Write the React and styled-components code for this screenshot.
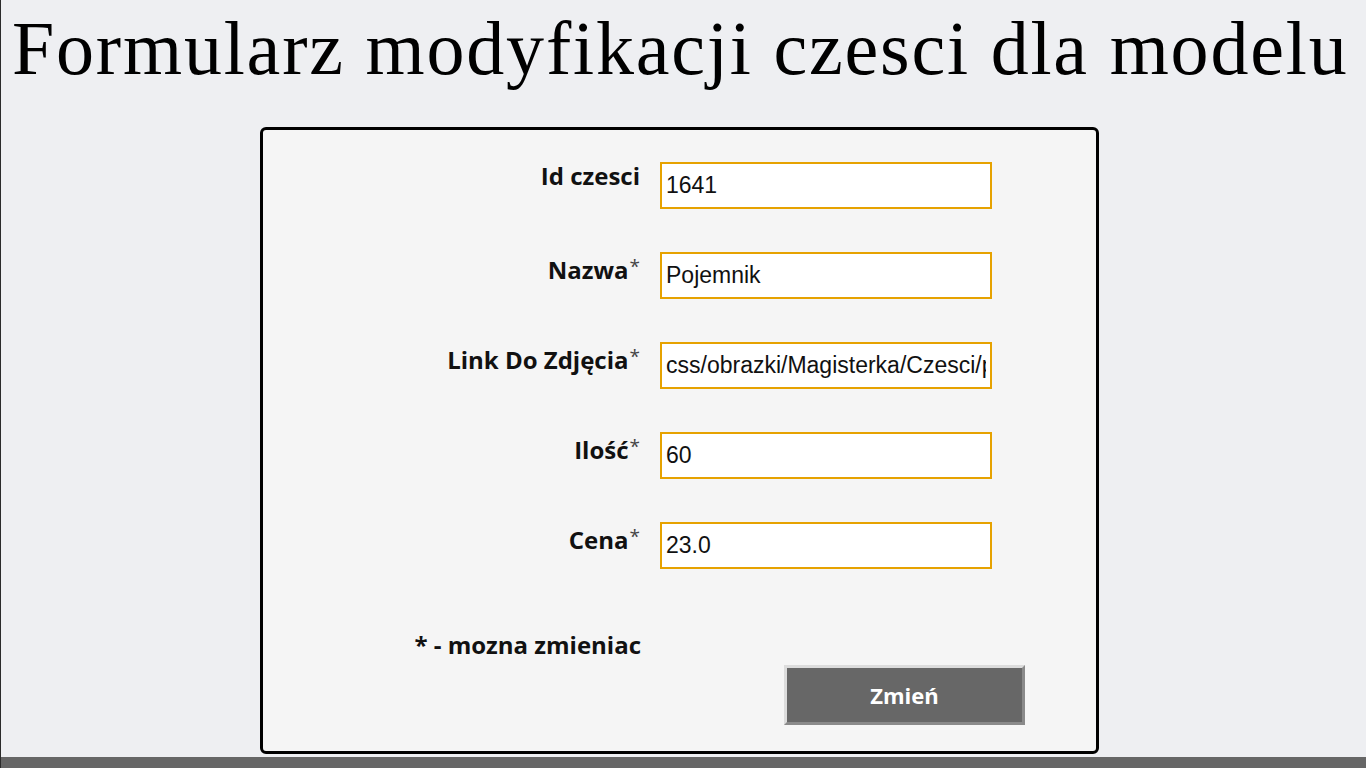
import React from "react";
import styled, { createGlobalStyle } from "styled-components";

const GlobalStyle = createGlobalStyle`
  html, body { margin: 0; padding: 0; }
  body { background: #eeeff2; }
  * { box-sizing: border-box; }
`;

const Page = styled.div`
  height: 100vh;
  display: flex;
  flex-direction: column;
  border-left: 1px solid #2b2b2b;
  overflow: hidden;
`;

const Title = styled.h1`
  margin: 4px 0 35px 11px;
  font-family: "Liberation Serif", "Times New Roman", serif;
  font-weight: 400;
  font-size: 76px;
  line-height: 88px;
  letter-spacing: 1.8px;
  color: #000;
  white-space: nowrap;
`;

const Panel = styled.form`
  margin-left: 259px;
  width: 839px;
  height: 627px;
  border: 3px solid #000;
  border-radius: 6px;
  background: #f5f5f5;
  padding: 32px 0 0;
  display: flex;
  flex-direction: column;
`;

const Fields = styled.div`
  display: grid;
  grid-template-columns: 377px 332px;
  column-gap: 20px;
  row-gap: 43px;
`;

const Label = styled.label`
  text-align: right;
  font-family: "Open Sans", "Liberation Sans", sans-serif;
  font-weight: 700;
  font-size: 24px;
  line-height: 28px;
  color: #111;
`;

const Star = styled.span`
  font-weight: 400;
  font-size: 19px;
  color: #444;
  vertical-align: 6px;
  margin-left: 1px;
`;

const Input = styled.input`
  width: 332px;
  height: 47px;
  margin: 0;
  border: 2px solid #e6a200;
  background: #fff;
  padding: 0 4px;
  font-family: "Liberation Sans", Arial, sans-serif;
  font-size: 23px;
  color: #111;
  outline: none;
`;

const Note = styled.div`
  width: 378px;
  margin-top: 62px;
  text-align: right;
  font-family: "Open Sans", "Liberation Sans", sans-serif;
  font-weight: 700;
  font-size: 24px;
  line-height: 28px;
  color: #111;
`;

const Button = styled.button`
  margin: 6px 0 0 521px;
  width: 241px;
  height: 60px;
  background: #676767;
  border-style: solid;
  border-width: 3px;
  border-color: #dcdcdc #8a8a8a #8a8a8a #dcdcdc;
  color: #fff;
  font-family: "Open Sans", "Liberation Sans", sans-serif;
  font-weight: 700;
  font-size: 22px;
  cursor: pointer;
`;

const FooterBar = styled.div`
  margin-top: auto;
  height: 11px;
  background: #666;
  margin-left: -1px;
`;

const fields = [
  { label: "Id czesci", value: "1641", star: false },
  { label: "Nazwa", value: "Pojemnik", star: true },
  { label: "Link Do Zdjęcia", value: "css/obrazki/Magisterka/Czesci/pojemnik.png", star: true },
  { label: "Ilość", value: "60", star: true },
  { label: "Cena", value: "23.0", star: true },
];

export default function App() {
  return (
    <>
      <GlobalStyle />
      <Page>
        <Title>Formularz modyfikacji czesci dla modelu</Title>
        <Panel onSubmit={(e) => e.preventDefault()}>
          <Fields>
            {fields.map((f) => (
              <React.Fragment key={f.label}>
                <Label>
                  {f.label}
                  {f.star && <Star>*</Star>}
                </Label>
                <Input defaultValue={f.value} readOnly={!f.star} />
              </React.Fragment>
            ))}
          </Fields>
          <Note>* - mozna zmieniac</Note>
          <Button type="submit">Zmień</Button>
        </Panel>
        <FooterBar />
      </Page>
    </>
  );
}
